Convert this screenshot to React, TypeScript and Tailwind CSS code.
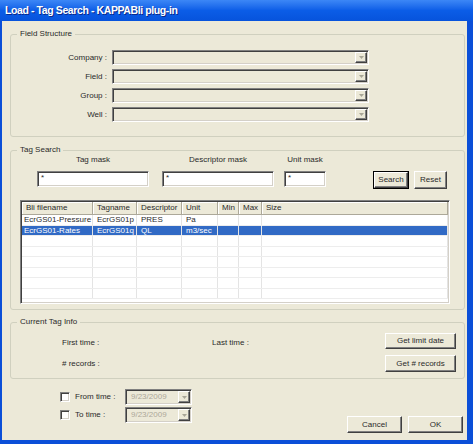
import React from "react";

const sunken =
  "border border-t-[#808080] border-l-[#808080] border-r-white border-b-white shadow-[inset_1px_1px_0_#404040,inset_-1px_-1px_0_#d4d0c8]";
const raised =
  "border border-t-white border-l-white border-r-[#404040] border-b-[#404040] shadow-[inset_-1px_-1px_0_#808080] bg-[#ECE9D8]";

function DropBtn() {
  return (
    <div className={`w-[12px] h-full flex items-center justify-center ${raised}`}>
      <svg width="5" height="3" viewBox="0 0 5 3">
        <path d="M0 0h5L2.5 3z" fill="#A8A697" />
      </svg>
    </div>
  );
}

function Combo({ label }: { label: string }) {
  return (
    <div className="flex items-center h-[15px]">
      <div className="w-[97px] text-right pr-[1px]">{label}</div>
      <div className={`ml-[4px] w-[257px] h-[15px] flex justify-end p-[1px] bg-[#ECE9D8] ${sunken}`}>
        <DropBtn />
      </div>
    </div>
  );
}

function MaskField({ label, width, className = "" }: { label: string; width: string; className?: string }) {
  return (
    <div className={`flex flex-col items-center ${width} ${className}`}>
      <div className="h-[10px] leading-[10px]">{label}</div>
      <div className={`mt-[6px] w-full h-[16px] bg-white pl-[3px] pt-[1px] leading-[10px] ${sunken}`}>*</div>
    </div>
  );
}

function Btn({ children, className = "" }: { children: React.ReactNode; className?: string }) {
  return (
    <div className={`flex items-center justify-center leading-[10px] ${raised} ${className}`}>
      {children}
    </div>
  );
}

function DatePick() {
  return (
    <div className={`ml-auto w-[67px] h-[16px] flex items-center p-[1px] bg-[#ECE9D8] ${sunken}`}>
      <span className="pl-[4px] text-[#ACA899] flex-1">9/23/2009</span>
      <DropBtn />
    </div>
  );
}

const cols = [
  { name: "Bli filename", w: "w-[71px]" },
  { name: "Tagname", w: "w-[44px]" },
  { name: "Descriptor", w: "w-[45px]" },
  { name: "Unit", w: "w-[36px]" },
  { name: "Min", w: "w-[21px]" },
  { name: "Max", w: "w-[23px]" },
  { name: "Size", w: "flex-1" },
];

const rows = [
  ["EcrGS01-Pressure", "EcrGS01p", "PRES", "Pa", "", "", ""],
  ["EcrGS01-Rates", "EcrGS01q", "QL", "m3/sec", "", "", ""],
  ["", "", "", "", "", "", ""],
  ["", "", "", "", "", "", ""],
  ["", "", "", "", "", "", ""],
  ["", "", "", "", "", "", ""],
  ["", "", "", "", "", "", ""],
  ["", "", "", "", "", "", ""],
];

export default function App() {
  return (
    <div className="w-[473px] h-[444px] flex flex-col bg-[#0B4FD8] font-['Liberation_Sans',Arial,sans-serif] text-[8px] text-[#2a2a2a] overflow-hidden">
      {/* Title bar */}
      <div className="h-[21px] flex items-center pl-[5px] bg-linear-to-b from-[#3C87F6] via-[#0B5DE7] to-[#0753DC]">
        <span className="text-white font-bold text-[10.5px] tracking-[-0.4px] [text-shadow:1px_1px_0_#0a2a8c]">
          Load - Tag Search - KAPPABli plug-in
        </span>
      </div>

      {/* Client area */}
      <div className="flex-1 ml-[2px] mr-[6px] mb-[4px] bg-[#ECE9D8] flex flex-col pt-[8px]">
        {/* Field Structure */}
        <fieldset className="ml-[8px] w-[455px] h-[108px] min-w-0 border border-[#D0D0BF] rounded-[3px]">
          <legend className="ml-[6px] px-[3px] leading-[10px]">Field Structure</legend>
          <div className="flex flex-col gap-[4px] pt-[11px]">
            <Combo label="Company :" />
            <Combo label="Field :" />
            <Combo label="Group :" />
            <Combo label="Well :" />
          </div>
        </fieldset>

        {/* Tag Search */}
        <fieldset className="mt-[8px] ml-[8px] w-[455px] h-[165px] min-w-0 border border-[#D0D0BF] rounded-[3px]">
          <legend className="ml-[6px] px-[3px] leading-[10px]">Tag Search</legend>
          <div className="flex items-start pl-[26px]">
            <MaskField label="Tag mask" width="w-[112px]" />
            <MaskField label="Descriptor mask" width="w-[112px]" className="ml-[13px]" />
            <MaskField label="Unit mask" width="w-[42px]" className="ml-[10px]" />
            <div className="flex gap-[5px] ml-[47px] mt-[16px]">
              <div className="w-[36px] h-[18px] border border-black">
                <Btn className="w-full h-full">Search</Btn>
              </div>
              <Btn className="w-[33px] h-[18px]">Reset</Btn>
            </div>
          </div>

          {/* List view */}
          <div className={`ml-[9px] mt-[11px] w-[430px] h-[104px] bg-white flex flex-col p-[1px] ${sunken}`}>
            <div className="h-[13px] flex bg-[#ECE9D8] border-b border-[#ACA899]">
              {cols.map((c) => (
                <div
                  key={c.name}
                  className={`${c.w} h-full pl-[4px] leading-[12px] border-r border-[#ACA899] shadow-[inset_1px_1px_0_white]`}
                >
                  {c.name}
                </div>
              ))}
            </div>
            {rows.map((r, i) => {
              const sel = i === 1;
              return (
                <div
                  key={i}
                  className={`h-[10.5px] flex border-b border-[#EDEDED] ${sel ? "bg-[#316AC5] text-white" : ""}`}
                >
                  {r.map((v, j) => (
                    <div
                      key={j}
                      className={`${cols[j].w} h-full leading-[10px] border-r border-[#E4E4E4] ${j === 0 ? "pl-[2px]" : "pl-[4px]"}`}
                    >
                      {v}
                    </div>
                  ))}
                </div>
              );
            })}
          </div>
        </fieldset>

        {/* Current Tag Info */}
        <fieldset className="mt-[7px] ml-[8px] w-[455px] h-[62px] min-w-0 border border-[#D0D0BF] rounded-[3px]">
          <legend className="ml-[6px] px-[3px] leading-[10px]">Current Tag Info</legend>
          <div className="flex items-center h-[16px] mt-[6px] pl-[51px] pr-[8px]">
            <div className="w-[150px] mt-[3px]">First time :</div>
            <div className="mt-[3px]">Last time :</div>
            <Btn className="ml-auto w-[71px] h-[16px]">Get limit date</Btn>
          </div>
          <div className="flex items-center h-[17px] mt-[6px] pl-[51px] pr-[8px]">
            <div># records :</div>
            <Btn className="ml-auto w-[71px] h-[17px]">Get # records</Btn>
          </div>
        </fieldset>

        {/* Time range + dialog buttons */}
        <div className="flex items-start mt-[10px]">
          <div className="flex flex-col gap-[2px] pl-[58px] w-[190px]">
            <div className="flex items-center h-[16px]">
              <div className={`w-[10px] h-[10px] bg-white ${sunken}`} />
              <span className="ml-[5px]">From time :</span>
              <DatePick />
            </div>
            <div className="flex items-center h-[16px]">
              <div className={`w-[10px] h-[10px] bg-white ${sunken}`} />
              <span className="ml-[5px]">To time :</span>
              <DatePick />
            </div>
          </div>
          <div className="ml-auto mr-[4px] mt-[27px] flex gap-[6px]">
            <Btn className="w-[55px] h-[17px]">Cancel</Btn>
            <Btn className="w-[55px] h-[17px]">OK</Btn>
          </div>
        </div>
      </div>
    </div>
  );
}
